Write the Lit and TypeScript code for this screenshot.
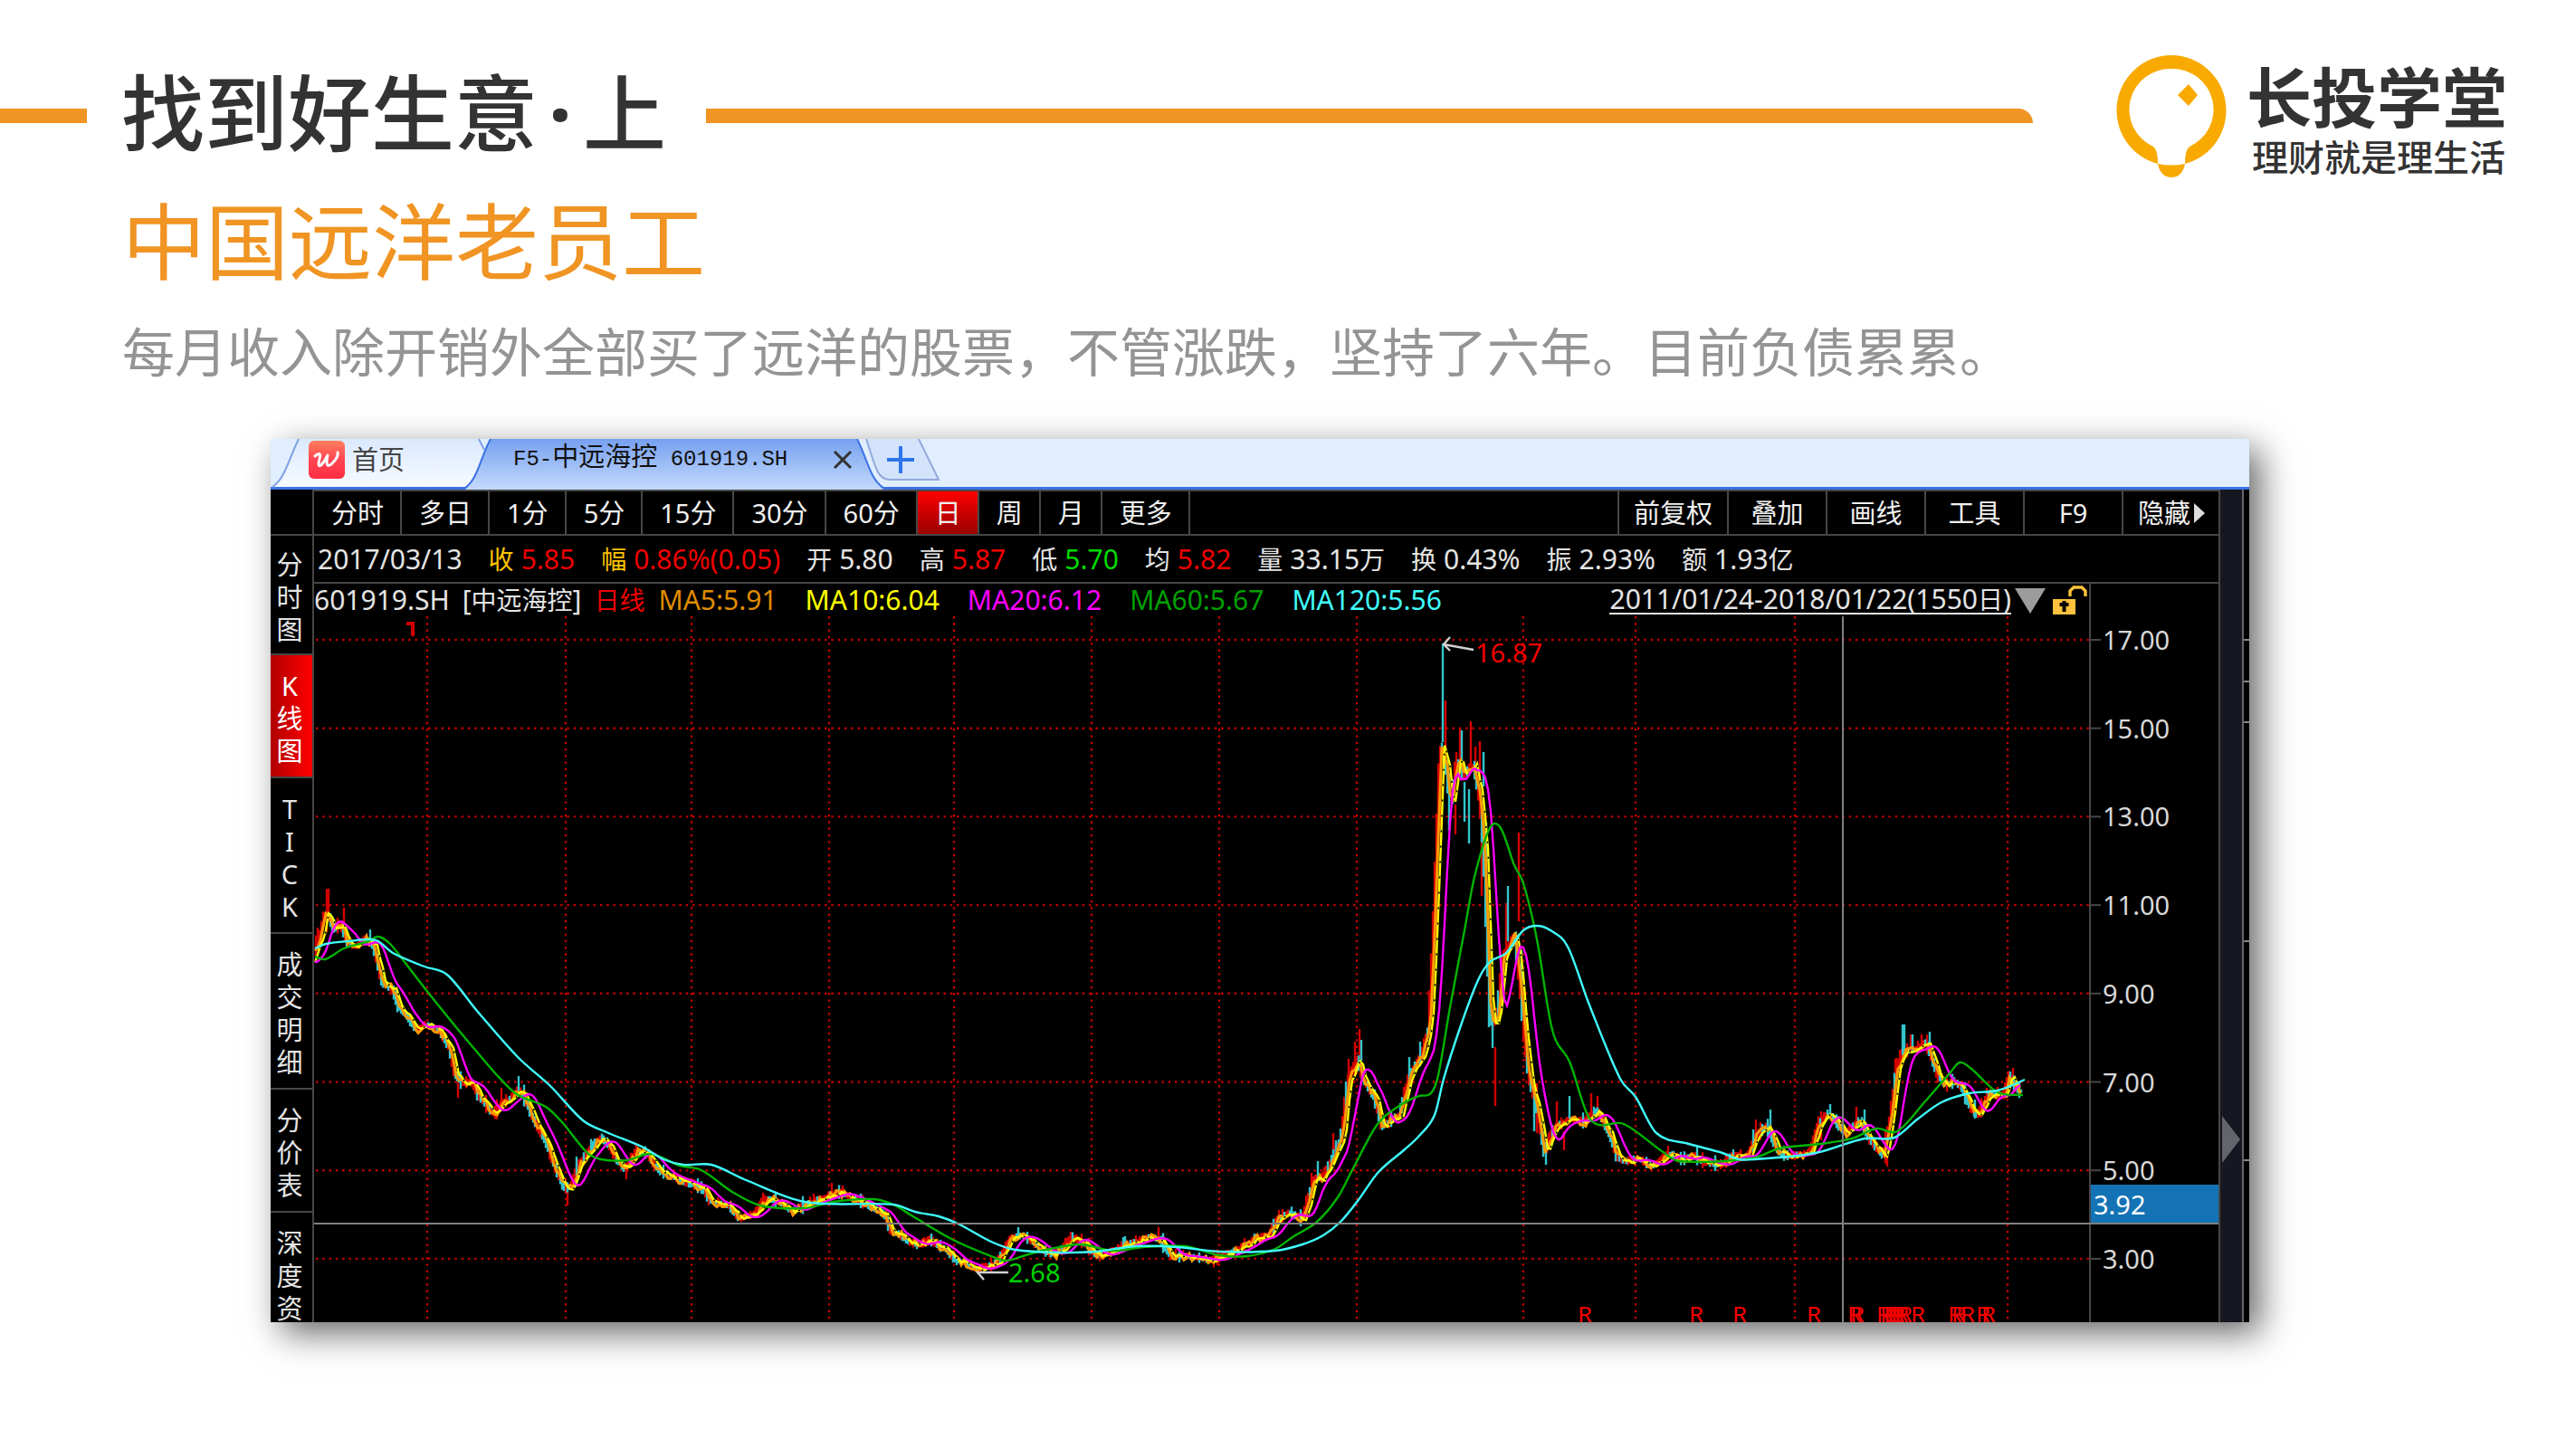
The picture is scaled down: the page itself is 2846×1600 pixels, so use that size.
import { LitElement, html, svg, css } from "lit";
import { customElement } from "lit/decorators.js";
import { classMap } from "lit/directives/class-map.js";

type Point = [number, number];

/* Closing price trace, in chart units. */
const PRICE: Point[] = [
  [348, 1063], [354, 1045], [358, 1038], [363, 1010], [368, 1013], [373, 1027], [381, 1022], [387, 1038], [396, 1047],
  [409, 1038], [417, 1045], [423, 1070], [427, 1087], [438, 1093], [445, 1113], [454, 1123], [464, 1138], [476, 1132],
  [490, 1140], [501, 1157], [507, 1187], [516, 1198], [525, 1195], [534, 1212], [550, 1232], [559, 1220], [568, 1215],
  [577, 1205], [583, 1210], [594, 1237], [608, 1263], [619, 1293], [628, 1313], [635, 1313], [644, 1287], [657, 1270],
  [668, 1258], [676, 1263], [684, 1280], [695, 1292], [708, 1273], [719, 1275], [731, 1292], [744, 1300], [757, 1305],
  [780, 1313], [791, 1328], [809, 1332], [822, 1347], [838, 1342], [851, 1325], [865, 1328], [880, 1339], [898, 1330],
  [920, 1322], [931, 1318], [949, 1325], [969, 1335], [982, 1342], [988, 1360], [999, 1365], [1009, 1373], [1020, 1376],
  [1032, 1370], [1041, 1377], [1049, 1380], [1060, 1393], [1074, 1397], [1085, 1404], [1095, 1399], [1106, 1396],
  [1114, 1382], [1122, 1367], [1135, 1366], [1146, 1373], [1156, 1382], [1168, 1387], [1179, 1380], [1189, 1367],
  [1202, 1374], [1217, 1388], [1234, 1383], [1246, 1376], [1259, 1373], [1273, 1367], [1286, 1370], [1298, 1387],
  [1313, 1388], [1344, 1393], [1363, 1385], [1378, 1378], [1393, 1368], [1405, 1367], [1416, 1348], [1430, 1340],
  [1443, 1348], [1449, 1330], [1456, 1302], [1464, 1303], [1474, 1286], [1487, 1257], [1493, 1197], [1504, 1170],
  [1510, 1192], [1524, 1215], [1531, 1245], [1551, 1232], [1562, 1187], [1575, 1168], [1583, 1138], [1588, 1038],
  [1592, 929], [1596, 824], [1602, 844], [1607, 894], [1615, 834], [1621, 859], [1632, 844], [1639, 879], [1644, 939],
  [1648, 1048], [1651, 1133], [1658, 1128], [1665, 1058], [1678, 1033], [1683, 1078], [1688, 1138], [1694, 1192],
  [1704, 1232], [1711, 1274], [1721, 1247], [1740, 1237], [1755, 1240], [1769, 1227], [1782, 1252], [1792, 1280],
  [1803, 1284], [1813, 1280], [1830, 1289], [1849, 1275], [1863, 1282], [1877, 1277], [1886, 1284], [1906, 1288],
  [1921, 1276], [1935, 1280], [1944, 1256], [1957, 1245], [1968, 1271], [1979, 1278], [2004, 1274], [2013, 1245],
  [2022, 1231], [2031, 1237], [2044, 1253], [2060, 1238], [2071, 1261], [2086, 1278], [2093, 1237], [2100, 1181],
  [2107, 1163], [2120, 1160], [2133, 1152], [2145, 1188], [2154, 1199], [2165, 1195], [2174, 1206], [2183, 1227],
  [2189, 1233], [2203, 1209], [2218, 1212], [2224, 1188], [2234, 1206],
];

const MA60: Point[] = [
  [348, 1057], [359, 1060], [380, 1048], [407, 1040], [418, 1035], [431, 1043], [447, 1063], [474, 1098], [519, 1153],
  [568, 1207], [603, 1223], [621, 1240], [648, 1273], [664, 1281], [693, 1282], [719, 1275], [751, 1288], [775, 1293],
  [809, 1317], [840, 1332], [889, 1335], [920, 1328], [965, 1325], [987, 1331], [1007, 1343], [1053, 1370],
  [1095, 1388], [1112, 1393], [1133, 1387], [1160, 1380], [1194, 1375], [1229, 1382], [1263, 1378], [1309, 1377],
  [1347, 1387], [1378, 1388], [1409, 1380], [1428, 1367], [1455, 1350], [1478, 1323], [1495, 1291], [1522, 1242],
  [1549, 1220], [1568, 1211], [1581, 1208], [1589, 1188], [1602, 1113], [1618, 1028], [1629, 969], [1646, 915],
  [1658, 915], [1673, 956], [1683, 976], [1698, 1038], [1715, 1138], [1734, 1173], [1757, 1237], [1794, 1242],
  [1836, 1272], [1855, 1283], [1935, 1280], [1966, 1269], [2011, 1264], [2046, 1258], [2073, 1247], [2096, 1250],
  [2127, 1217], [2154, 1186], [2165, 1174], [2178, 1181], [2207, 1207], [2235, 1210],
];

const MA120: Point[] = [
  [348, 1048], [360, 1043], [385, 1040], [407, 1038], [418, 1040], [434, 1053], [469, 1068], [494, 1077], [527, 1117],
  [572, 1168], [608, 1200], [644, 1238], [670, 1251], [711, 1268], [733, 1281], [755, 1287], [786, 1287], [822, 1303],
  [889, 1328], [987, 1331], [1011, 1339], [1037, 1344], [1060, 1353], [1095, 1372], [1122, 1381], [1171, 1384],
  [1210, 1383], [1256, 1377], [1301, 1378], [1347, 1383], [1409, 1382], [1439, 1375], [1462, 1365], [1481, 1350],
  [1500, 1327], [1523, 1295], [1552, 1270], [1568, 1255], [1585, 1232], [1595, 1192], [1614, 1133], [1633, 1083],
  [1646, 1063], [1664, 1053], [1683, 1028], [1698, 1023], [1713, 1028], [1732, 1046], [1755, 1108], [1790, 1192],
  [1807, 1212], [1830, 1252], [1866, 1264], [1903, 1274], [1921, 1281], [1939, 1281], [2006, 1274], [2060, 1258],
  [2093, 1257], [2118, 1237], [2145, 1218], [2176, 1208], [2207, 1205], [2237, 1193],
];

/* High and low extremes of single days: x, top, bottom, rising. */
const EXTREMES: [number, number, number, boolean][] = [
  [351, 1025, 1040, true], [361, 982, 1030, true], [363, 982, 1010, true], [380, 1003, 1023, true], [409, 1027, 1040, false],
  [506, 1193, 1213, true], [573, 1189, 1207, false], [554, 1202, 1220, true], [627, 1317, 1332, true],
  [637, 1278, 1300, false], [657, 1258, 1270, false], [692, 1290, 1303, true], [844, 1320, 1335, true],
  [919, 1307, 1320, true], [931, 1310, 1320, true], [1125, 1356, 1366, false], [1183, 1361, 1371, true],
  [1243, 1366, 1376, false], [1280, 1356, 1368, true], [1386, 1363, 1373, false], [1413, 1337, 1352, true],
  [1456, 1283, 1302, false], [1473, 1252, 1287, true], [1476, 1260, 1278, false], [1481, 1247, 1270, false],
  [1490, 1170, 1227, true], [1497, 1151, 1187, true], [1502, 1137, 1170, true], [1504, 1149, 1172, false],
  [1557, 1168, 1207, false], [1569, 1151, 1178, false], [1587, 964, 1038, true], [1591, 844, 914, true],
  [1594, 711, 820, false], [1597, 774, 834, true], [1601, 854, 918, false], [1608, 889, 922, true],
  [1613, 805, 854, true], [1615, 807, 850, false], [1618, 864, 908, false], [1623, 872, 932, false],
  [1625, 797, 849, true], [1630, 825, 850, true], [1635, 819, 862, true], [1639, 831, 869, false],
  [1637, 919, 990, true], [1642, 909, 999, false], [1649, 1120, 1158, false], [1652, 1157, 1222, true],
  [1664, 998, 1058, true], [1666, 979, 1040, false], [1678, 920, 1018, true], [1681, 1050, 1093, false],
  [1686, 1120, 1173, true], [1695, 1217, 1250, false], [1698, 1197, 1252, true], [1708, 1262, 1287, false],
  [1720, 1217, 1245, true], [1728, 1250, 1271, true], [1734, 1211, 1236, false], [1758, 1208, 1238, true],
  [1765, 1211, 1230, true], [1940, 1237, 1263, true], [1956, 1226, 1246, false], [2012, 1228, 1260, true],
  [2022, 1220, 1232, false], [2051, 1223, 1243, true], [2060, 1226, 1240, false], [2085, 1275, 1289, true],
  [2094, 1170, 1230, true], [2102, 1132, 1166, false], [2104, 1132, 1166, false], [2113, 1143, 1162, false],
  [2111, 1143, 1162, true], [2123, 1143, 1160, true], [2132, 1140, 1155, false], [2182, 1215, 1236, false],
  [2224, 1180, 1190, true],
];

const YEAR_LINES = [472, 625, 764, 916, 1054, 1206, 1347, 1499, 1683, 1807, 1983, 2218];
const SCALE = ["17.00", "15.00", "13.00", "11.00", "9.00", "7.00", "5.00", "3.00"];
const SCALE_TOP = 707;
const SCALE_STEP = 97.7;
const REPORTS = [1745, 1868, 1916, 1998, 2043, 2046, 2075, 2079, 2083, 2087, 2091, 2095, 2099, 2113, 2154, 2158, 2168, 2185, 2191];
const FIRST = 348;
const LAST = 2234;

function priceAt(x: number): number {
  if (x <= PRICE[0][0]) return PRICE[0][1];
  for (let i = 1; i < PRICE.length; i++) {
    const [x1, y1] = PRICE[i];
    if (x <= x1) {
      const [x0, y0] = PRICE[i - 1];
      return y0 + ((y1 - y0) * (x - x0)) / (x1 - x0);
    }
  }
  return PRICE[PRICE.length - 1][1];
}

function noise(i: number): number {
  const s = Math.sin(i * 127.1 + 11.7) * 43758.5453;
  return s - Math.floor(s);
}

function series(step: number, at: (x: number, i: number) => number): string {
  const out: string[] = [];
  for (let x = FIRST, i = 0; x <= LAST; x += step, i++) out.push(`${x},${at(x, i).toFixed(1)}`);
  return out.join(" ");
}

const ma10 = series(3, (x, i) => priceAt(x) + (noise(i) - 0.5) * 3);
const ma5 = series(3, (x, i) => priceAt(x + 3) + (noise(i + 900) - 0.5) * 9);
const ma20 = series(3, (x) => {
  let sum = 0;
  for (let k = 0; k < 8; k++) sum += priceAt(x - 1 - k * 2);
  return sum / 8;
});

function candles(rising: boolean): string {
  const out: string[] = [];
  for (let x = FIRST + 1, i = 0; x < LAST; x += 2, i++) {
    const a = priceAt(x + 3);
    const b = priceAt(x + 6);
    const up = b < a ? noise(i + 40) < 0.8 : noise(i + 40) < 0.4;
    if (up !== rising) continue;
    const spread = 2 + (noise(i + 300) > 0.8 ? noise(i + 77) * 9 : noise(i + 77) * 3);
    out.push(`M${x} ${(Math.min(a, b) - spread).toFixed(1)}V${(Math.max(a, b) + spread * 0.7).toFixed(1)}`);
  }
  for (const [x, top, bottom, up] of EXTREMES) if (up === rising) out.push(`M${x} ${top}V${bottom}`);
  return out.join("");
}

/* Catmull-Rom spline through the points, as cubic Bezier segments. */
function smooth(p: Point[]): string {
  let d = `M${p[0][0]} ${p[0][1]}`;
  for (let i = 0; i < p.length - 1; i++) {
    const a = p[Math.max(0, i - 1)];
    const b = p[i];
    const c = p[i + 1];
    const e = p[Math.min(p.length - 1, i + 2)];
    const dx = (c[0] - b[0]) / 3;
    const s1 = (c[1] - a[1]) / (c[0] - a[0]);
    const s2 = (e[1] - b[1]) / (e[0] - b[0]);
    d += `C${(b[0] + dx).toFixed(1)} ${(b[1] + s1 * dx).toFixed(1)} ${(c[0] - dx).toFixed(1)} ${(c[1] - s2 * dx).toFixed(1)} ${c[0]} ${c[1]}`;
  }
  return d;
}

const rises = candles(true);
const falls = candles(false);

@customElement("price-chart")
export class PriceChart extends LitElement {
  static styles = css`
    :host { display: block; }
    svg { display: block; width: 100%; height: auto; }
    .grid { stroke: #c40000; stroke-width: 2.4; stroke-dasharray: 2.4 4.9; }
    .frame { stroke: #474747; stroke-width: 2; }
    .cross { stroke: #808080; stroke-width: 2; }
    .trace { fill: none; stroke-width: 2.4; }
    .rise { stroke: #d40000; }
    .fall { stroke: #33c4cc; }
    .ma5 { stroke: #ff9a00; stroke-width: 3; }
    .ma10 { stroke: #ffff00; }
    .ma20 { stroke: #ff00ff; }
    .ma60 { stroke: #00b400; }
    .ma120 { stroke: #40ffff; }
    .hollow { stroke: #000; stroke-width: 1.6; stroke-dasharray: 2 15; }
    text { font-family: "Noto Sans", "Open Sans", sans-serif; font-size: 29px; fill: #d8d8d8; }
    .high, .report { fill: #f40000; }
    .report { font-size: 26px; }
    .low { fill: #00d000; }
    .now { fill: #fff; }
    .badge { fill: #1373b5; }
    .arrow { fill: none; stroke: #d0d0d0; stroke-width: 2.4; }
    .mark { fill: none; stroke: #d00000; stroke-width: 4; }
  `;

  render() {
    const rows = SCALE.map((label, i) => ({ label, y: SCALE_TOP + i * SCALE_STEP }));
    return html`<svg viewBox="347 681 2104 780" role="img" aria-label="中远海控 日线">
      ${rows.map((r) => svg`<line class="grid" x1="349" x2="2308" y1=${r.y} y2=${r.y}></line>
        <line class="frame" x1="2310" x2="2321" y1=${r.y} y2=${r.y}></line>
        <text x="2323" y=${r.y + 11}>${r.label}</text>`)}
      ${YEAR_LINES.map((x) => svg`<line class="grid" x1=${x} x2=${x} y1="681" y2="1461"></line>`)}
      <line class="frame" x1="2309" x2="2309" y1="681" y2="1461"></line>
      <path class="mark" d="M449 689H456V703"></path>
      <path class="trace rise" d=${rises}></path>
      <path class="trace fall" d=${falls}></path>
      <polyline class="trace ma5" points=${ma5}></polyline>
      <polyline class="trace ma10" points=${ma10}></polyline>
      <polyline class="trace hollow" points=${ma10}></polyline>
      <polyline class="trace ma20" points=${ma20}></polyline>
      <path class="trace ma60" d=${smooth(MA60)}></path>
      <path class="trace ma120" d=${smooth(MA120)}></path>
      <line class="cross" x1="347" x2="2451" y1="1352" y2="1352"></line>
      <line class="cross" x1="2036" x2="2036" y1="681" y2="1461"></line>
      <path class="arrow" d="M1628 718L1595 712M1602 704L1595 712L1602 719"></path>
      <text class="high" x="1630" y="732">16.87</text>
      <path class="arrow" d="M1114 1406H1080L1087 1414"></path>
      <text class="low" x="1114" y="1417">2.68</text>
      <rect class="badge" x="2310" y="1309" width="141" height="42"></rect>
      <text class="now" x="2313" y="1342">3.92</text>
      ${REPORTS.map((x) => svg`<text class="report" x=${x - 2} y="1462">R</text>`)}
    </svg>`;
  }
}

const PERIODS = ["分时", "多日", "1分", "5分", "15分", "30分", "60分", "日", "周", "月", "更多"];
const TOOLS = ["前复权", "叠加", "画线", "工具", "F9"];
const VIEWS = ["分时图", "K线图", "TICK", "成交明细", "分价表", "深度资"];
const QUOTE = [
  { label: "收", value: "5.85", tone: "up", gold: true },
  { label: "幅", value: "0.86%(0.05)", tone: "up", gold: true },
  { label: "开", value: "5.80", tone: "" },
  { label: "高", value: "5.87", tone: "up" },
  { label: "低", value: "5.70", tone: "down" },
  { label: "均", value: "5.82", tone: "up" },
  { label: "量", value: "33.15", unit: "万", tone: "" },
  { label: "换", value: "0.43%", tone: "" },
  { label: "振", value: "2.93%", tone: "" },
  { label: "额", value: "1.93", unit: "亿", tone: "" },
];
const AVERAGES = [
  { text: "MA5:5.91", tone: "m5" },
  { text: "MA10:6.04", tone: "m10" },
  { text: "MA20:6.12", tone: "m20" },
  { text: "MA60:5.67", tone: "m60" },
  { text: "MA120:5.56", tone: "m120" },
];

@customElement("stock-window")
export class StockWindow extends LitElement {
  static styles = css`
    :host { display: block; background: #000; color: #e4e4e4; font-family: "Noto Sans", "Noto Sans CJK SC", sans-serif; font-size: 30px; line-height: 36px; }
    button { margin: 0; padding: 0; border: 0; background: none; color: inherit; font: inherit; cursor: pointer; white-space: nowrap; }
    .cjk { font-size: 28px; }
    .tabs { position: relative; display: flex; align-items: center; height: 56px; padding: 0 0 7px 42px; box-sizing: border-box; background: #e0eeff; border-bottom: 3px solid #3a72e4; overflow: visible; }
    .shapes { position: absolute; left: 0; top: 0; width: 760px; height: 56px; }
    .tabs button { position: relative; display: flex; align-items: center; height: 44px; }
    .home { gap: 8px; color: #444; font-size: 29px; }
    .home svg { width: 40px; height: 42px; }
    .tabs .active { margin-left: 120px; color: #111; font-family: "Liberation Mono", "Noto Sans CJK SC", monospace; font-size: 24px; white-space: pre; }
    .tabs .active .cjk { font-size: 29px; }
    .tabs .close { margin-left: 50px; }
    .tabs .add { margin-left: 38px; }
    .body { display: grid; grid-template-columns: 48px minmax(0, 1fr) 34px; }
    .side { height: 0; min-height: 100%; overflow: hidden; box-sizing: border-box; border-right: 2px solid #474747; display: flex; flex-direction: column; }
    .side::before { content: ""; flex: none; height: 49px; border-bottom: 2px solid #474747; }
    .view { flex: none; display: flex; flex-direction: column; align-items: center; }
    .side .view { padding: 16px 4px 10px 0; border-bottom: 2px solid #474747; font-size: 29px; }
    .side .view:first-child { padding: 14px 4px 8px 0; }
    .side .view:last-child { border: 0; }
    .side .picked { background: linear-gradient(90deg, #b00000, #ff0000); color: #fff; }
    .toolbar { display: flex; height: 47px; border-top: 2px solid #474747; border-bottom: 2px solid #474747; font-size: 29px; color: #f0f0f0; }
    .toolbar button { padding: 0 18px 0 19px; border-right: 2px solid #474747; }
    .toolbar .picked { background: linear-gradient(#ff0000, #980000); }
    .tools { display: flex; margin-left: auto; border-left: 2px solid #474747; }
    .tools button { min-width: 109px; padding: 0 16px; }
    .tools .hide { display: flex; align-items: center; min-width: 0; padding: 0 15px 0 16px; border: 0; }
    .hide svg { width: 12px; height: 22px; margin-left: 4px; }
    .quote { display: flex; align-items: center; gap: 29px; height: 51px; padding-left: 4px; border-bottom: 2px solid #474747; white-space: nowrap; }
    .pair { display: flex; gap: 8px; }
    .value { display: flex; }
    .gold { color: #ffc400; }
    .up { color: #f00000; }
    .down { color: #00dc00; }
    .legend { display: flex; height: 36px; white-space: nowrap; }
    .name { margin-right: 14px; }
    .kind { color: #f00000; margin-right: 15px; }
    .averages { display: flex; gap: 31px; }
    .m5 { color: #e08c00; }
    .m10 { color: #ffff00; }
    .m20 { color: #ff00ff; }
    .m60 { color: #00a000; }
    .m120 { color: #40ffff; }
    .legend .range { margin-left: auto; height: 34px; border-bottom: 2px solid #e4e4e4; box-sizing: border-box; line-height: 34px; }
    .drop { width: 36px; height: 30px; margin: 4px 6px 0 4px; }
    .lock { width: 40px; height: 34px; }
    .gutter { flex: none; width: 141px; border-left: 2px solid #474747; }
    .edge { display: grid; grid-template-columns: 24px 1fr; border-left: 2px solid #474747; }
    .handle { display: flex; align-items: flex-start; background: #151820; }
    .edge .handle svg { width: 20px; height: 52px; margin: 692px 0 0 2px; }
    .ticks { border-left: 2px solid #666; }
    .ticks svg { display: block; width: 100%; height: 100%; }
  `;

  render() {
    return html`
      <nav class="tabs">
        <svg class="shapes" viewBox="0 0 760 56" aria-hidden="true">
          <defs>
            <linearGradient id="idle" x2="0" y2="1"><stop stop-color="#dbe9fe"></stop><stop offset="1" stop-color="#f6faff"></stop></linearGradient>
            <linearGradient id="live" x2="0" y2="1"><stop stop-color="#76a0f0"></stop><stop offset="1" stop-color="#c4dafc"></stop></linearGradient>
          </defs>
          <path d="M2 53C16 44 20 22 31 0H230L240 53Z" fill="url(#idle)"></path>
          <path d="M2 53C16 44 20 22 31 0M230 0L236 12" fill="none" stroke="#7da2e4" stroke-width="2"></path>
          <path d="M658 0C668 30 670 45 684 45H738L716 0Z" fill="#d3e3fb"></path>
          <path d="M658 0C668 30 670 45 684 45H738L716 0" fill="none" stroke="#93a9dc" stroke-width="2"></path>
          <path d="M215 56C229 44 232 20 243 0H648C660 24 662 44 677 56Z" fill="url(#live)"></path>
          <path d="M215 54C229 44 232 20 243 0M648 0C660 24 662 44 677 54" fill="none" stroke="#3a72e4" stroke-width="2"></path>
        </svg>
        <button class="home">
          <svg viewBox="0 0 40 42" aria-hidden="true">
            <defs><linearGradient id="red" x2="0" y2="1"><stop stop-color="#ff7f5c"></stop><stop offset="0.5" stop-color="#ff4552"></stop><stop offset="1" stop-color="#ff2c44"></stop></linearGradient></defs>
            <rect width="40" height="42" rx="6" fill="url(#red)"></rect>
            <path d="M7 17C12 13 14 14 12 20C10 28 11 31 17 23L21 16C19 25 20 31 26 25C30 21 33 17 32 13" fill="none" stroke="#fff" stroke-width="3" stroke-linecap="round" stroke-linejoin="round"></path>
          </svg>
          首页
        </button>
        <button class="active">F5-<span class="cjk">中远海控</span> 601919.SH</button>
        <button class="close" aria-label="关闭">
          <svg width="22" height="22" viewBox="0 0 22 22"><path d="M2 2L20 20M20 2L2 20" stroke="#333" stroke-width="3"></path></svg>
        </button>
        <button class="add" aria-label="新建">
          <svg width="30" height="30" viewBox="0 0 30 30"><path d="M15 0V30M0 15H30" stroke="#2f74ea" stroke-width="4"></path></svg>
        </button>
      </nav>
      <div class="body">
        <div class="side">
          ${VIEWS.map((v) => html`<button class=${classMap({ view: true, picked: v === "K线图" })}>${[...v].map((c) => html`<span>${c}</span>`)}</button>`)}
        </div>
        <div class="main">
          <div class="toolbar">
            ${PERIODS.map((p) => html`<button class=${classMap({ picked: p === "日" })}>${p}</button>`)}
            <div class="tools">
              ${TOOLS.map((t) => html`<button>${t}</button>`)}
              <button class="hide">隐藏<svg viewBox="0 0 12 22" aria-hidden="true"><path d="M0 0L12 11L0 22Z" fill="#ddd"></path></svg></button>
            </div>
          </div>
          <div class="quote">
            <span>2017/03/13</span>
            ${QUOTE.map((q) => html`<span class="pair"><span class=${classMap({ cjk: true, gold: !!q.gold })}>${q.label}</span><span class="value ${q.tone}">${q.value}${q.unit ? html`<span class="cjk">${q.unit}</span>` : ""}</span></span>`)}
          </div>
          <div class="legend">
            <span class="name">601919.SH</span>
            <span class="name">[<span class="cjk">中远海控</span>]</span>
            <span class="kind cjk">日线</span>
            <span class="averages">${AVERAGES.map((a) => html`<span class=${a.tone}>${a.text}</span>`)}</span>
            <button class="range">2011/01/24-2018/01/22(1550<span class="cjk">日</span>)</button>
            <svg class="drop" viewBox="0 0 36 30" aria-hidden="true"><path d="M0 1H34L17 29Z" fill="#9c9c9c"></path></svg>
            <svg class="lock" viewBox="0 0 40 34" aria-hidden="true">
              <rect x="0" y="17" width="25" height="17" fill="#ffc13d"></rect>
              <path d="M19 14V8L23 4H32L36 8V14" fill="none" stroke="#ffc13d" stroke-width="3.4"></path>
              <path d="M12.500 19V31M7.500 23H17.500" stroke="#000" stroke-width="4"></path>
            </svg>
            <span class="gutter"></span>
          </div>
          <price-chart></price-chart>
        </div>
        <div class="edge">
          <div class="handle"><svg viewBox="0 0 20 52" aria-hidden="true"><path d="M0 0L20 26L0 52Z" fill="#62666c"></path></svg></div>
          <div class="ticks">
            <svg viewBox="0 0 6 920" preserveAspectRatio="none" aria-hidden="true"><path d="M0 166H6M0 212H6M0 257H6M0 499H6M0 741H6" stroke="#888" stroke-width="2"></path></svg>
          </div>
        </div>
      </div>
    `;
  }
}

const STORY = [
  "每月收入除开销外全部买了远洋的股票",
  "不管涨跌",
  "坚持了六年。目前负债累累。",
].join("\uFF0C");

@customElement("app-root")
export class AppRoot extends LitElement {
  static styles = css`
    :host { display: block; min-height: 100vh; box-sizing: border-box; padding: 60px 0 100px; background: #fff; color: #333; font-family: "Noto Sans CJK SC", sans-serif; overflow: hidden; }
    .head { display: flex; align-items: center; height: 136px; }
    .bar { height: 16px; background: #f09423; }
    .lead { width: 96px; }
    .rule { flex: 1; border-top-right-radius: 16px; }
    h1, h2, p { margin: 0; font-weight: 400; }
    h1 { align-self: flex-start; margin: 0 44px 0 38px; font-size: 92px; line-height: 120px; font-weight: 500; white-space: nowrap; }
    .dot { padding: 0 12px; font-family: "Noto Sans", sans-serif; font-weight: 700; }
    .logo { display: flex; align-items: center; margin: 0 76px 0 92px; }
    .bulb { width: 122px; height: 136px; margin-right: 22px; }
    .words { display: flex; flex-direction: column; }
    .school { font-size: 72px; line-height: 88px; font-weight: 700; }
    .motto { padding-left: 6px; font-size: 40px; line-height: 48px; font-weight: 500; }
    h2 { padding: 0 0 10px 135px; font-size: 92px; line-height: 132px; color: #f09423; }
    p { padding-left: 135px; font-size: 58px; line-height: 96px; color: #949494; white-space: nowrap; }
    .shot { margin: 51px 361px 0 299px; box-shadow: 12px 12px 36px rgba(0, 0, 0, 0.6); }
  `;

  render() {
    return html`
      <header class="head">
        <div class="bar lead"></div>
        <h1>找到好生意<span class="dot">·</span>上</h1>
        <div class="bar rule"></div>
        <div class="logo">
          <svg class="bulb" viewBox="0 0 122 136" aria-hidden="true">
            <path fill="#f9aa00" fill-rule="evenodd" d="M61 1A61 61 0 0 1 76 121Q73 136 61 136Q49 136 46 121A61 61 0 0 1 61 1ZM61 16A45 45 0 0 0 41 102Q46 105 46 121Q61 124 76 121Q76 105 81 102A45 45 0 0 0 61 16Z"></path>
            <path fill="#f9aa00" d="M80 33L90 45L80 57L68 45Z"></path>
          </svg>
          <div class="words"><span class="school">长投学堂</span><span class="motto">理财就是理生活</span></div>
        </div>
      </header>
      <h2>中国远洋老员工</h2>
      <p>${STORY}</p>
      <stock-window class="shot"></stock-window>
    `;
  }
}
